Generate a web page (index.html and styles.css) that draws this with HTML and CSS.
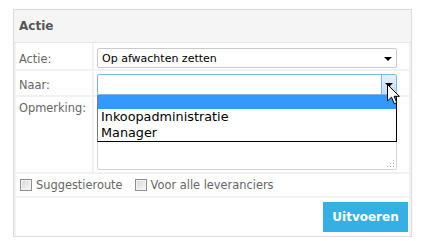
FILE: index.html
```html
<!DOCTYPE html>
<html>
<head>
<meta charset="utf-8">
<link rel="stylesheet" href="styles.css">
</head>
<body>
<div class="panel">
  <div class="panel-head">Actie</div>
  <div class="form">
    <div class="lbl lbl-r1">Actie:</div>
    <div class="cell cell-r1">
      <div class="sel">
        <span class="sel-text">Op afwachten zetten</span>
        <span class="sel-btn"><span class="tri"></span></span>
      </div>
    </div>
    <div class="lbl lbl-r2">Naar:</div>
    <div class="cell cell-r2">
      <div class="sel-wrap">
        <div class="sel sel-focus">
          <span class="sel-text"></span>
          <span class="sel-btn sel-btn-hover"><span class="tri"></span></span>
        </div>
        <div class="list">
          <div class="opt opt-blank"></div>
          <div class="opt">Inkoopadministratie</div>
          <div class="opt">Manager</div>
        </div>
        <svg class="cursor" width="14" height="22" viewBox="0 0 14 22"><path d="M0.5 0.5 L0.5 17 L4.5 13.2 L7.3 19.8 L9.8 18.7 L7.1 12.3 L12.4 12.3 Z" fill="#fff" stroke="#000" stroke-width="1" stroke-linejoin="miter"/></svg>
      </div>
    </div>
    <div class="lbl lbl-r3">Opmerking:</div>
    <div class="cell cell-r3">
      <div class="area">
        <svg class="grip" width="9" height="9" viewBox="0 0 9 9"><g fill="#b5b5b5"><rect x="7" y="1" width="1" height="1"/><rect x="4" y="4" width="1" height="1"/><rect x="7" y="4" width="1" height="1"/><rect x="1" y="7" width="1" height="1"/><rect x="4" y="7" width="1" height="1"/><rect x="7" y="7" width="1" height="1"/></g></svg>
      </div>
    </div>
    <div class="wide checks">
      <label class="chk"><span class="box"></span>Suggestieroute</label>
      <label class="chk"><span class="box"></span>Voor alle leveranciers</label>
    </div>
    <div class="wide actions">
      <button class="btn">Uitvoeren</button>
    </div>
  </div>
</div>
</body>
</html>
```
FILE: styles.css
```css
* { box-sizing: border-box; }
body {
  margin: 0;
  background: #fff;
  font-family: "DejaVu Sans", Verdana, sans-serif;
}
.panel {
  margin: 9px 0 0 13px;
  width: 399px;
  border: 1px solid #dcdcdc;
  background: #f1f1f1;
}
.panel-head {
  height: 33px;
  line-height: 32px;
  padding-left: 5px;
  background: #f5f5f5;
  border-bottom: 1px solid #e2e2e2;
  font-weight: bold;
  font-size: 12px;
  color: #555;
}
.form {
  display: grid;
  grid-template-columns: 76px 1fr;
  grid-template-rows: 26px 24px 75px 22px 38px;
  gap: 2px;
  padding: 0 2px 0 2px;
}
.lbl, .cell, .wide { background: #fff; }
.lbl {
  font-size: 11.4px;
  color: #666;
  padding-left: 3px;
  line-height: 13px;
}
.lbl-r1 { padding-top: 10px; }
.lbl-r2 { padding-top: 8px; }
.lbl-r3 { padding-top: 5px; }
.cell { padding-left: 3px; }
.cell-r1 { padding-top: 5px; }
.cell-r2 { padding-top: 3px; }
.cell-r3 { padding-top: 0; }
.wide { grid-column: 1 / 3; }
.sel-wrap { position: relative; width: 300px; }
.sel {
  position: relative;
  width: 300px;
  height: 20px;
  border: 1px solid #c9c9c9;
  border-radius: 2px;
  display: flex;
  align-items: center;
  justify-content: space-between;
  font-size: 11px;
  color: #000;
}
.sel-text { padding-left: 4px; }
.sel-btn {
  width: 15px;
  height: 18px;
  display: flex;
  align-items: center;
  justify-content: center;
  margin-right: 1px;
}
.tri {
  width: 0; height: 0;
  border-left: 4px solid transparent;
  border-right: 4px solid transparent;
  border-top: 4px solid #000;
  margin-top: 1px;
}
.sel-focus { border-color: #7eb4ea; height: 21px; }
.sel-btn-hover {
  margin-right: 0;
  height: 19px;
  width: 15px;
  background: linear-gradient(#e6f2fd, #c3def9);
  border-left: 1px solid #7eb4ea;
}
.list {
  position: absolute;
  left: 0;
  top: 21px;
  width: 300px;
  background: #fff;
  border: 1px solid #000;
  border-left-color: #7a7a7a;
  border-top: none;
  font-size: 12.8px;
  color: #000;
  z-index: 2;
}
.opt { height: 16px; line-height: 16px; padding-left: 3px; }
.opt-blank { height: 14px; background: #3399ff; }
.cursor { position: absolute; left: 290px; top: 10px; z-index: 3; }
.area {
  position: relative;
  width: 300px;
  height: 73px;
  border: 1px solid #d4d4d4;
  border-radius: 2px;
  background: #fff;
}
.grip { position: absolute; right: 1px; bottom: 1px; }
.checks {
  display: flex;
  align-items: center;
  gap: 12px;
  padding-left: 4px;
  font-size: 11.4px;
  color: #666;
}
.chk { display: flex; align-items: center; gap: 4px; }
.box {
  width: 12px;
  height: 12px;
  border: 1px solid #8e8e8e;
  background: linear-gradient(135deg, #d8d8d8, #f8f8f8);
  box-shadow: inset 0 0 0 1px #f4f4f4;
}
.actions {
  display: flex;
  justify-content: flex-end;
  align-items: flex-start;
  padding: 4px 1px 0 0;
}
.btn {
  width: 85px;
  height: 30px;
  border: none;
  background: #36afe5;
  color: #fff;
  font-family: "DejaVu Sans", Verdana, sans-serif;
  font-weight: bold;
  font-size: 12px;
  padding: 0;
}
```
